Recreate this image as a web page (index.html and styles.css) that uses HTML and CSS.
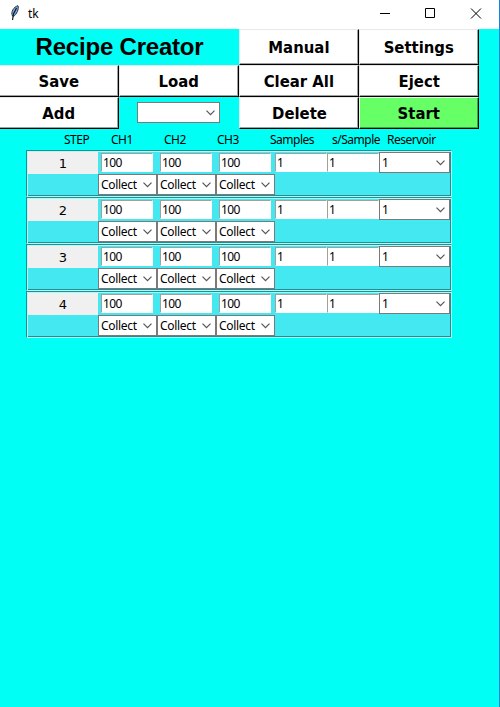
FILE: index.html
```
<!DOCTYPE html>
<html lang="en">
<head>
<meta charset="utf-8">
<title>tk</title>
<link rel="stylesheet" href="styles.css">
</head>
<body>
<div class="window">
  <header class="titlebar">
    <svg class="feather" width="10" height="16" viewBox="0 0 10 16"><path d="M2.500 11C.5 7 3.500 2 8 .7C9 4 7 9 3.500 11.500Z" fill="#78a9e4" stroke="#2b3442"/><path d="M6.500 3L3.500 9L2.500 15" fill="none" stroke="#101820" stroke-width="1.200"/></svg>
    <span class="caption">tk</span>
    <svg class="controls" width="110" height="12" viewBox="0 0 110 12" fill="none" stroke="#000"><path d="M0 5.500H10M45.500 .5H54.500V9.500H45.500ZM91 .5L101 10.500M101 .5L91 10.500"/></svg>
  </header>
  <nav class="toolbar">
    <h1>Recipe Creator</h1>
    <button><span>Manual</span></button>
    <button><span>Settings</span></button>
    <button class="first"><span>Save</span></button>
    <button><span>Load</span></button>
    <button><span>Clear All</span></button>
    <button><span>Eject</span></button>
    <button class="first"><span>Add</span></button>
    <div class="picker"><div class="combo"><svg class="chev" width="9" height="6" viewBox="0 0 9 6"><path d="M.5 .7L4.500 4.700L8.500 .7"/></svg></div></div>
    <button><span>Delete</span></button>
    <button class="start"><span>Start</span></button>
  </nav>
  <div class="heads"><span>STEP</span><span>CH1</span><span>CH2</span><span>CH3</span><span>Samples</span><span>s/Sample</span><span>Reservoir</span></div>
  <main id="steps"></main>
</div>
<script src="app.js"></script>
</body>
</html>
```
FILE: app.js
```
const chevron = '<svg class="chev" width="9" height="6" viewBox="0 0 9 6"><path d="M.5 .7L4.500 4.700L8.500 .7"/></svg>';
const combo = text => `<div class="combo"><span>${text}</span>${chevron}</div>`;
const entry = text => `<div class="cell"><div class="entry">${text}</div></div>`;
document.getElementById('steps').innerHTML = [1, 2, 3, 4].map(n => `
  <section class="step">
    <div class="number"><span>${n}</span></div>
    ${entry(100).repeat(3)}${entry(1).repeat(2)}${combo(1)}
    <div></div>${combo('Collect').repeat(3)}
  </section>`).join('');
```
FILE: styles.css
```
* { box-sizing: border-box; }
body { margin: 0; font: 12px "Noto Sans", sans-serif; color: #000; }
.window { width: 500px; height: 707px; background: #00fff5; border-right: 1px solid #1883d7; overflow: hidden; }
.titlebar { height: 29px; background: #fff; display: flex; align-items: flex-start; }
.feather { margin: 5px 0 0 10px; }
.caption { margin: 5px 0 0 8px; line-height: 17px; letter-spacing: -.2px; }
.controls { margin: 8px 9px 0 auto; }
.toolbar { display: grid; grid-template-columns: 119px 120px 120px 120px; grid-template-rows: 36px 32px 32px; }
h1 { grid-column: span 2; margin: 0; text-align: center; font: bold 24px/36px "Liberation Sans", sans-serif; letter-spacing: -.2px; }
button { display: flex; align-items: center; justify-content: center; padding: 0; background: #fff; color: #000; border: 1px solid; border-color: #e8e8e8 #000 #000 #e8e8e8; box-shadow: inset -1px -1px #a0a0a0; font: bold 16px "DejaVu Sans", sans-serif; }
button span { transform: scaleX(.93); white-space: nowrap; }
.first { border-left: 0; padding-right: 1px; }
.start { background: #66ff66; border-color: #e0ffe0 #000 #000 #e0ffe0; box-shadow: inset -1px -1px #479f47; }
.picker { padding: 5px 19px 6px 18px; }
.combo { height: 21px; background: #fff; border: 1px solid #7a7a7a; display: flex; align-items: center; padding: 0 4px 0 2px; line-height: 17px; letter-spacing: -.3px; }
.combo .chev { margin-left: auto; }
.chev { fill: none; stroke: #555; stroke-width: 1.200; flex: none; }
.heads { display: grid; grid-template-columns: 47px 53px 53px 53px 62px 55px 60px; padding: 2px 0 0 64px; height: 21px; line-height: 17px; letter-spacing: -.5px; white-space: nowrap; }
main { padding-left: 26px; }
.step { width: 426px; height: 47px; border: 1px solid; border-color: #298a92 #a5fff9 #a5fff9 #298a92; box-shadow: inset 1px 1px #a5fff9, inset -1px -1px #298a92; padding: 1px; background: #43e8f0; display: grid; grid-template-columns: 70px 59px 59px 59px 52px 52px 71px; grid-template-rows: 22px 21px; }
.number { background: #f0f0f0; display: flex; align-items: center; justify-content: center; font: 13px "DejaVu Sans", sans-serif; }
.cell { padding: 1px 4px 2px 3px; }
.cell:nth-child(n+5) { padding-left: 0; padding-right: 0; }
.entry { height: 19px; background: #fff; border: 1px solid; border-color: #a0a0a0 #fff #fff #a0a0a0; padding-left: 1px; line-height: 18px; letter-spacing: -.6px; }
```
